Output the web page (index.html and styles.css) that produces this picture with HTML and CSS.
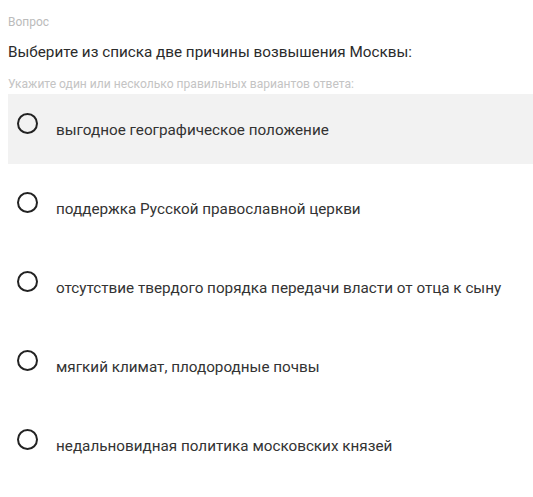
FILE: index.html
```html
<!DOCTYPE html>
<html lang="ru">
<head>
  <meta charset="UTF-8" />
  <title>Вопрос</title>
  <link rel="stylesheet" href="styles.css">
</head>
<body>

<div class="question">
  <div class="label">Вопрос</div>
  <div class="title">Выберите из списка две причины возвышения Москвы:</div>
  <div class="hint">Укажите один или несколько правильных вариантов ответа:</div>

  <div class="options">
    <div class="option active">
      <span class="radio"></span>
      <span class="text">выгодное географическое положение</span>
    </div>
    <div class="option">
      <span class="radio"></span>
      <span class="text">поддержка Русской православной церкви</span>
    </div>
    <div class="option">
      <span class="radio"></span>
      <span class="text">отсутствие твердого порядка передачи власти от отца к сыну</span>
    </div>
    <div class="option">
      <span class="radio"></span>
      <span class="text">мягкий климат, плодородные почвы</span>
    </div>
    <div class="option">
      <span class="radio"></span>
      <span class="text">недальновидная политика московских князей</span>
    </div>
  </div>
</div>

</body>
</html>
```

FILE: styles.css
```css
* {
  box-sizing: border-box;
}
body {
  font-family: Roboto, Arial, sans-serif;
  background: #fff;
  margin: 0;
  padding: 14px 0 0 8px;
  color: #333;
}

.label {
  font-size: 12px;
  color: #bbb;
  line-height: 16px;
}

.title {
  font-size: 15.25px;
  line-height: 20px;
  margin-top: 12px;
  color: #2b2b2b;
}

.hint {
  font-size: 12.1px;
  color: #c4c4c4;
  line-height: 16px;
  margin-top: 14px;
}

.options {
  margin-top: 2px;
  display: flex;
  flex-direction: column;
  gap: 9px;
}

.option {
  height: 70px;
  display: flex;
  align-items: flex-start;
  padding: 19px 0 0 9px;
}

.option.active {
  background: #f2f2f2;
}

.radio {
  width: 21px;
  height: 21px;
  border: 2px solid #222;
  border-radius: 50%;
  flex-shrink: 0;
}

.text {
  margin: 7px 0 0 18px;
  font-size: 15.25px;
  line-height: 20px;
  color: #333;
}
```
